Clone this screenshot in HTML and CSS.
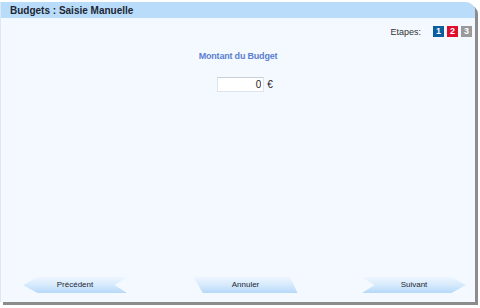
FILE: index.html
```html
<!DOCTYPE html>
<html>
<head>
<meta charset="UTF-8" />
<title>Budgets : Saisie Manuelle</title>
<link rel="stylesheet" href="styles.css">
</head>
<body>
<div class="window">
  <div class="titlebar">Budgets : Saisie Manuelle</div>
  <div class="content">
    <div class="steps">
      <span class="steps-label">Etapes:</span>
      <span class="step done">1</span>
      <span class="step current">2</span>
      <span class="step todo">3</span>
    </div>
    <div class="heading">Montant du Budget</div>
    <div class="amount">
      <input class="amount-input" type="text" value="0" />
      <span class="currency">€</span>
    </div>
  </div>
  <div class="footer">
    <div class="btn btn-prev">Précédent</div>
    <div class="btn btn-cancel">Annuler</div>
    <div class="btn btn-next">Suivant</div>
  </div>
</div>
</body>
</html>
```

FILE: styles.css
```css
html, body { height: 308px; }
body { margin: 0; background: #ffffff; font-family: "Liberation Sans", Arial, sans-serif; }
.window { margin: 2px 0 0 0; width: 475px; height: 300px; background: #f3f9ff; border-radius: 0 9px 0 0; box-shadow: 3px 3px 0 #8c8c8c; display: flex; flex-direction: column; border-left: 1px solid #dce8f4; box-sizing: border-box; }
.titlebar { height: 16px; background: #b9dcfa; border-radius: 0 9px 0 0; font-size: 10px; font-weight: bold; color: #1c2634; padding-left: 9px; line-height: 17px; }
.content { flex: 1; display: flex; flex-direction: column; align-items: center; }
.steps { align-self: flex-end; display: flex; align-items: center; gap: 3px; margin-top: 8px; margin-right: 3px; }
.steps-label { font-size: 9px; color: #333; margin-right: 9px; }
.step { width: 11px; height: 11px; font-size: 9px; font-weight: bold; color: #fff; text-align: center; line-height: 11px; }
.step.done { background: #0b5f9e; }
.step.current { background: #e0102c; }
.step.todo { background: #9a9a9a; }
.heading { font-size: 9px; font-weight: bold; color: #5b7fd1; margin-top: 14px; letter-spacing: -0.2px; }
.amount { display: flex; align-items: center; gap: 3px; margin-top: 16px; margin-left: 14px; }
.amount-input { width: 47px; height: 15px; box-sizing: border-box; border: 1px solid #dde4ec; border-top-color: #c8d0da; background: #fff; font-family: "Liberation Sans", Arial, sans-serif; font-size: 10px; text-align: right; padding: 0 2px; color: #222; }
.currency { font-size: 10px; color: #222; }
.footer { display: flex; justify-content: space-between; align-items: center; padding: 0 9px 9px 22px; }
.btn { height: 16px; width: 104px; font-size: 8px; color: #1c2634; text-align: center; line-height: 16px; background: linear-gradient(to bottom, #eef6fe 0%, #d6eafc 50%, #b6d8f8 100%); }
.btn-prev { clip-path: polygon(0 50%, 14% 0, 100% 0, 88% 50%, 100% 100%, 14% 100%); }
.btn-cancel { clip-path: polygon(0 0, 93% 0, 100% 100%, 9% 100%); margin-left: 2px; }
.btn-next { clip-path: polygon(0 0, 86% 0, 100% 50%, 86% 100%, 0 100%, 12% 50%); }
```
